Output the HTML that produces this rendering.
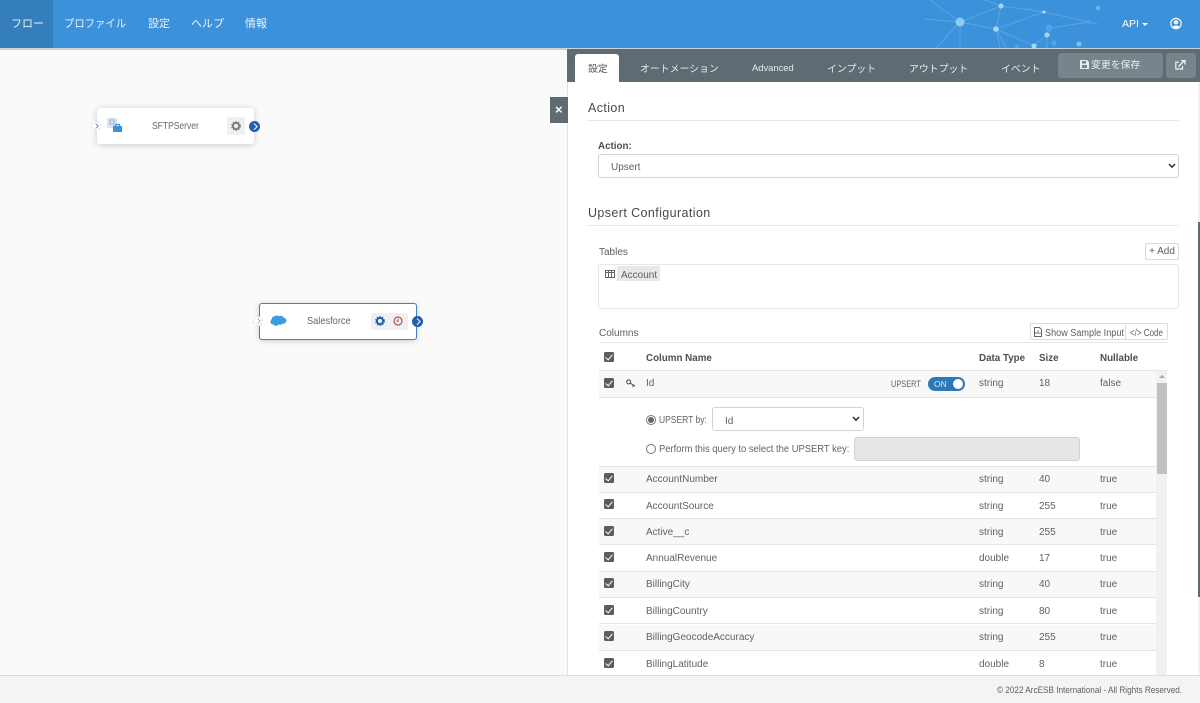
<!DOCTYPE html>
<html lang="ja">
<head>
<meta charset="utf-8">
<title>Flow</title>
<style>
*{box-sizing:border-box}
html,body{margin:0;padding:0;width:1200px;height:703px;overflow:hidden;background:#fafafa}
body{position:relative;font-family:"Liberation Sans","Noto Sans CJK JP",sans-serif;font-size:10px;color:#5a5f63}
.a{position:absolute;white-space:nowrap}
.nav{color:#e9f2fb;font-size:11px;top:15px}
.tab{color:#e8ecee;font-size:9.9px;top:61px}
.hd{font-size:12.5px;color:#44494d;font-weight:400;letter-spacing:.4px}
.b{font-weight:700;color:#4a4f53;font-size:9.8px}
.hr{height:1px;background:#e8e8e8}
.cb{position:absolute;left:604px;width:10px;height:10px;background:#5c5c5c;border-radius:1.5px}
.cb:after{content:"";position:absolute;left:3px;top:1px;width:3px;height:6px;border:solid #fff;border-width:0 1.5px 1.5px 0;transform:rotate(40deg)}
.row{position:absolute;left:599px;width:557px;height:26px;border-bottom:1px solid #e3e3e3}
.row.alt{background:#f8f8f8}
.t{position:absolute;white-space:nowrap;font-size:10px;color:#5e6266;margin-top:1px}
.sel{position:absolute;background:#fff;border:1px solid #cfd3d6;border-radius:3px;font-size:10px;color:#5e6266}
.sq{transform-origin:0 50%}
</style>
</head>
<body>
<!-- top bar -->
<div class="a" style="left:0;top:0;width:1200px;height:48px;background:#3c92da"></div>
<div class="a" style="left:0;top:0;width:53px;height:48px;background:#347fbb"></div>
<svg class="a" style="left:900px;top:0" width="230" height="48" viewBox="900 0 230 48">
<g stroke="#7fbdec" stroke-width="1" fill="none" opacity=".45">
<path d="M960 22L1001 6L996 29L960 22M1001 6L1044 12L996 29L1034 46M996 29L1006 48M996 29L1000 48M960 22L960 48M960 22L936 48M960 22L925 19M960 22L930 0M1001 6L985 0M1047 35L1047 48M1047 35L1034 46M1050 28L1089 22M1044 12L1098 24"/>
</g>
<circle cx="960" cy="22" r="4.5" fill="#8fcbf3"/><circle cx="1001" cy="6" r="2.5" fill="#a5d6f6"/>
<circle cx="996" cy="29" r="2.8" fill="#a5d6f6"/><circle cx="1044" cy="12" r="1.5" fill="#b7dff8"/>
<circle cx="1047" cy="35" r="2.5" fill="#a5d6f6"/><circle cx="1034" cy="46" r="2.6" fill="#a5d6f6"/>
<circle cx="1049" cy="28" r="3.5" fill="#4aa8ea"/><circle cx="1054" cy="43" r="2.6" fill="#4aa8ea"/>
<circle cx="1079" cy="44" r="2.5" fill="#7cc0ef"/><circle cx="1089" cy="22" r="2.4" fill="#4aa0e2"/>
<circle cx="1098" cy="8" r="2.4" fill="#68b2e8"/><circle cx="1029" cy="9" r="1.8" fill="#4c9fe0"/>
<circle cx="1017" cy="47" r="2" fill="#4aa8ea"/>
</svg>
<div class="a nav" style="left:11px">フロー</div>
<div class="a nav sq" style="left:64px;transform:scaleX(.94)">プロファイル</div>
<div class="a nav" style="left:148px">設定</div>
<div class="a nav" style="left:191px">ヘルプ</div>
<div class="a nav" style="left:245px">情報</div>
<div class="a" style="left:1122px;top:18px;color:#fff;font-size:10.5px">API</div>
<div class="a" style="left:1142px;top:23px;border:3px solid transparent;border-top:3px solid #fff;border-bottom:0"></div>
<svg class="a" style="left:1170px;top:17px" width="12" height="13" viewBox="0 0 12 12"><circle cx="6" cy="6" r="5.2" fill="none" stroke="#fff" stroke-width="1.1"/><circle cx="6" cy="4.7" r="2.2" fill="#fff"/><path d="M2.5 9.5C3.5 7.5 8.5 7.5 9.5 9.5C8 11.3 4 11.3 2.5 9.5Z" fill="#fff"/></svg>
<div class="a" style="left:0;top:48px;width:1200px;height:2px;background:#cdd3d8"></div>

<!-- canvas nodes -->
<div class="a" style="left:97px;top:108px;width:157px;height:36px;background:#fff;border-radius:3px;box-shadow:0 1px 7px rgba(0,0,0,.2)"></div>
<div class="a" style="left:91px;top:121px;width:10px;height:10px;border:1px dashed #d8d8d8;border-radius:50%;background:#fff"></div>
<div class="a" style="left:94px;top:124px;width:4px;height:4px;border:solid #7c8ea6;border-width:1px 1px 0 0;transform:rotate(45deg)"></div>
<svg class="a" style="left:107px;top:118px" width="16" height="16" viewBox="0 0 16 16"><rect x="0" y="0" width="10" height="10" fill="#dfe3e8"/><rect x="3" y="2" width="4" height="4" fill="none" stroke="#8fb7dc"/><rect x="6" y="8" width="9" height="6" fill="#3c92da"/><path d="M8.5 8V6.5h4V8" fill="none" stroke="#3c92da" stroke-width="1.2"/></svg>
<div class="a sq" style="left:152px;top:120px;font-size:10.5px;color:#666;transform:scaleX(.81)">SFTPServer</div>
<div class="a" style="left:227px;top:117px;width:18px;height:18px;background:#f0f0f0;border-radius:2px"></div>
<svg class="a" style="left:231px;top:121px" width="10" height="10" viewBox="0 0 10 10"><circle cx="5" cy="5" r="3.1" fill="none" stroke="#808080" stroke-width="2"/><circle cx="5" cy="5" r="4.3" fill="none" stroke="#808080" stroke-width="1.2" stroke-dasharray="1.4 1.4"/></svg>
<div class="a" style="left:249px;top:121px;width:11px;height:11px;background:#1f5fae;border-radius:50%"></div>
<div class="a" style="left:251.5px;top:124px;width:4.5px;height:4.5px;border:solid #fff;border-width:1.3px 1.3px 0 0;transform:rotate(45deg)"></div>

<div class="a" style="left:259px;top:303px;width:158px;height:37px;background:#fff;border:1px solid #3f7fc4;border-radius:3px;box-shadow:0 1px 6px rgba(0,0,0,.18)"></div>
<div class="a" style="left:253px;top:316px;width:10px;height:10px;border:1px dashed #d8d8d8;border-radius:50%;background:#fff"></div>
<div class="a" style="left:256px;top:319px;width:4px;height:4px;border:solid #a9b3bf;border-width:1px 1px 0 0;transform:rotate(45deg)"></div>
<svg class="a" style="left:270px;top:315px" width="17" height="12" viewBox="0 0 17 12"><path d="M5 1.5C6 .3 8 .2 9 1.3C10.5 .3 12.8 .8 13.5 2.6C15.5 2.8 16.8 4.6 16.2 6.5C15.7 8.3 14 9 12.3 8.7C11.5 10 9.5 10.3 8.4 9.4C7.5 11.3 4.5 11.5 3.5 9.4C1.5 9.6 .2 8 .5 6.2C.7 5 1.4 4.3 2 4C1.7 2.5 3.6 .7 5 1.5Z" fill="#3a9ddc"/></svg>
<div class="a sq" style="left:307px;top:315px;font-size:10.5px;color:#666;transform:scaleX(.88)">Salesforce</div>
<div class="a" style="left:371px;top:313px;width:37px;height:17px;background:#f0f0f0;border-radius:2px"></div>
<svg class="a" style="left:375px;top:316px" width="10" height="10" viewBox="0 0 10 10"><circle cx="5" cy="5" r="3.1" fill="none" stroke="#1f5fae" stroke-width="2"/><circle cx="5" cy="5" r="4.3" fill="none" stroke="#1f5fae" stroke-width="1.2" stroke-dasharray="1.4 1.4"/></svg>
<svg class="a" style="left:393px;top:316px" width="10" height="10" viewBox="0 0 10 10"><circle cx="5" cy="5" r="4" fill="none" stroke="#a8574a" stroke-width="1.2"/><path d="M5 2.6V5.2H3.2" fill="none" stroke="#a8574a" stroke-width="1"/></svg>
<div class="a" style="left:412px;top:316px;width:11px;height:11px;background:#1f5fae;border-radius:50%"></div>
<div class="a" style="left:414.5px;top:319px;width:4.5px;height:4.5px;border:solid #fff;border-width:1.3px 1.3px 0 0;transform:rotate(45deg)"></div>

<!-- right panel -->
<div class="a" style="left:567px;top:50px;width:631px;height:625px;background:#fff;border-left:1px solid #e0e0e0"></div>
<div class="a" style="left:1198px;top:50px;width:2px;height:625px;background:#f1f1f1"></div>
<div class="a" style="left:1198px;top:222px;width:2px;height:375px;background:#5c6a72"></div>
<div class="a" style="left:550px;top:97px;width:18px;height:26px;background:#5f6b72"></div>
<div class="a" style="left:555px;top:102px;color:#fff;font-size:13px;font-weight:700">×</div>

<div class="a" style="left:567px;top:49px;width:633px;height:33px;background:#5f6b72"></div>
<div class="a" style="left:575px;top:54px;width:44px;height:28px;background:#fff;border-radius:3px 3px 0 0"></div>
<div class="a tab" style="left:588px;color:#555">設定</div>
<div class="a tab" style="left:640px">オートメーション</div>
<div class="a tab" style="left:752px;top:62px;font-size:9.4px">Advanced</div>
<div class="a tab" style="left:827px">インプット</div>
<div class="a tab" style="left:909px">アウトプット</div>
<div class="a tab" style="left:1001px">イベント</div>
<div class="a" style="left:1058px;top:53px;width:105px;height:25px;background:#78848c;border-radius:3px"></div>
<svg class="a" style="left:1080px;top:60px" width="9" height="9" viewBox="0 0 9 9"><path d="M0 0H7L9 2V9H0Z" fill="#e8ecee"/><rect x="2" y="1" width="4" height="2.5" fill="#78848c"/><rect x="2" y="5" width="5" height="3" fill="#78848c"/></svg>
<div class="a" style="left:1091px;top:57px;color:#eef0f2;font-size:9.9px">変更を保存</div>
<div class="a" style="left:1166px;top:53px;width:30px;height:25px;background:#78848c;border-radius:3px"></div>
<svg class="a" style="left:1175px;top:60px" width="11" height="10" viewBox="0 0 11 10"><path d="M7.5 6V9H.8V2.2H4" fill="none" stroke="#f1f3f4" stroke-width="1.2"/><path d="M3.5 6.5L9 1M6 .6H10V4.5" fill="none" stroke="#f1f3f4" stroke-width="1.3"/></svg>

<div class="a hd" style="left:588px;top:101px">Action</div>
<div class="a hr" style="left:587px;top:120px;width:592px"></div>
<div class="a b" style="left:598px;top:141px">Action:</div>
<div class="sel" style="left:598px;top:154px;width:581px;height:24px;padding:7px 12px">Upsert</div>
<svg class="a" style="left:1168px;top:163px" width="8" height="6" viewBox="0 0 8 6"><path d="M1 1L4 4.2L7 1" fill="none" stroke="#333" stroke-width="1.5"/></svg>

<div class="a hd" style="left:588px;top:206px">Upsert Configuration</div>
<div class="a hr" style="left:587px;top:225px;width:592px"></div>

<div class="a" style="left:599px;top:247px">Tables</div>
<div class="a" style="left:1145px;top:243px;width:34px;height:17px;border:1px solid #d5dde4;border-radius:2px;text-align:center;font-size:10px;line-height:15px">+ Add</div>
<div class="a" style="left:598px;top:264px;width:581px;height:45px;border:1px solid #e6e6e6;border-radius:3px"></div>
<svg class="a" style="left:605px;top:270px" width="10" height="8" viewBox="0 0 10 8"><rect x=".5" y=".5" width="9" height="7" fill="none" stroke="#666"/><path d="M.5 2.5H9.5M3.5 .5V7.5M6.5 .5V7.5" stroke="#666" fill="none"/></svg>
<div class="a" style="left:617px;top:266px;width:43px;height:15px;background:#e8e8e8"></div>
<div class="a" style="left:621px;top:270px">Account</div>

<div class="a" style="left:599px;top:328px">Columns</div>
<div class="a" style="left:1030px;top:323px;width:138px;height:17px;border:1px solid #d5dde4;border-radius:2px"></div>
<div class="a" style="left:1125px;top:324px;width:1px;height:15px;background:#d5dde4"></div>
<svg class="a" style="left:1034px;top:327px" width="8" height="10" viewBox="0 0 8 10"><path d="M.5.5H5.5L7.5 2.5V9.5H.5Z" fill="none" stroke="#666"/><path d="M2 7V5M4 7V3.5M6 7V5.5" stroke="#666"/></svg>
<div class="a sq" style="left:1045px;top:328px;font-size:10px;transform:scaleX(.91)">Show Sample Input</div>
<div class="a sq" style="left:1130px;top:328px;font-size:10px;transform:scaleX(.8)">&lt;/&gt; Code</div>
<div class="a hr" style="left:599px;top:342px;width:569px"></div>

<div class="cb" style="top:352px"></div>
<div class="a b" style="left:646px;top:353px">Column Name</div>
<div class="a b" style="left:979px;top:353px">Data Type</div>
<div class="a b" style="left:1039px;top:353px">Size</div>
<div class="a b" style="left:1100px;top:353px">Nullable</div>

<!-- rows -->
<div class="a hr" style="left:599px;top:370px;width:569px"></div>
<div class="row alt" style="top:371px;height:27px"></div>
<div class="cb" style="top:378px"></div>
<svg class="a" style="left:626px;top:379px" width="10" height="9" viewBox="0 0 10 9"><circle cx="2.7" cy="2.9" r="2" fill="none" stroke="#555" stroke-width="1.1"/><path d="M4.3 4.2L9 7M7 6V8.3" fill="none" stroke="#555" stroke-width="1.1"/></svg>
<div class="t" style="left:646px;top:377px">Id</div>
<div class="t sq" style="left:891px;top:378px;font-size:9.5px;transform:scaleX(.78)">UPSERT</div>
<div class="a" style="left:928px;top:377px;width:37px;height:14px;background:#2c78b8;border-radius:7px"></div>
<div class="a" style="left:934px;top:379px;color:#d7e8f5;font-size:8.5px">ON</div>
<div class="a" style="left:953px;top:379px;width:10px;height:10px;background:#fff;border-radius:50%"></div>
<div class="t" style="left:979px;top:377px">string</div>
<div class="t" style="left:1039px;top:377px">18</div>
<div class="t" style="left:1100px;top:377px">false</div>

<div class="a" style="left:646px;top:415px;width:10px;height:10px;border:1px solid #777;border-radius:50%"></div>
<div class="a" style="left:648px;top:417px;width:6px;height:6px;background:#666;border-radius:50%"></div>
<div class="t sq" style="left:659px;top:414px;transform:scaleX(.85)">UPSERT by:</div>
<div class="sel" style="left:712px;top:407px;width:152px;height:24px;padding:8px 12px">Id</div>
<svg class="a" style="left:852px;top:416px" width="8" height="6" viewBox="0 0 8 6"><path d="M1 1L4 4.2L7 1" fill="none" stroke="#333" stroke-width="1.5"/></svg>
<div class="a" style="left:646px;top:444px;width:10px;height:10px;border:1px solid #777;border-radius:50%"></div>
<div class="t sq" style="left:659px;top:443px;transform:scaleX(.94)">Perform this query to select the UPSERT key:</div>
<div class="a" style="left:854px;top:437px;width:226px;height:24px;background:#e6e6e6;border:1px solid #d2d2d2;border-radius:3px"></div>
<div class="a hr" style="left:599px;top:466px;width:557px;background:#e3e3e3"></div>

<div class="row alt" style="top:467px"></div><div class="cb" style="top:473px"></div>
<div class="t" style="left:646px;top:473px">AccountNumber</div><div class="t" style="left:979px;top:473px">string</div><div class="t" style="left:1039px;top:473px">40</div><div class="t" style="left:1100px;top:473px">true</div>
<div class="row" style="top:493px"></div><div class="cb" style="top:499px"></div>
<div class="t" style="left:646px;top:500px">AccountSource</div><div class="t" style="left:979px;top:500px">string</div><div class="t" style="left:1039px;top:500px">255</div><div class="t" style="left:1100px;top:500px">true</div>
<div class="row alt" style="top:519px"></div><div class="cb" style="top:526px"></div>
<div class="t" style="left:646px;top:526px">Active__c</div><div class="t" style="left:979px;top:526px">string</div><div class="t" style="left:1039px;top:526px">255</div><div class="t" style="left:1100px;top:526px">true</div>
<div class="row" style="top:546px"></div><div class="cb" style="top:552px"></div>
<div class="t" style="left:646px;top:552px">AnnualRevenue</div><div class="t" style="left:979px;top:552px">double</div><div class="t" style="left:1039px;top:552px">17</div><div class="t" style="left:1100px;top:552px">true</div>
<div class="row alt" style="top:572px"></div><div class="cb" style="top:578px"></div>
<div class="t" style="left:646px;top:578px">BillingCity</div><div class="t" style="left:979px;top:578px">string</div><div class="t" style="left:1039px;top:578px">40</div><div class="t" style="left:1100px;top:578px">true</div>
<div class="row" style="top:598px"></div><div class="cb" style="top:605px"></div>
<div class="t" style="left:646px;top:605px">BillingCountry</div><div class="t" style="left:979px;top:605px">string</div><div class="t" style="left:1039px;top:605px">80</div><div class="t" style="left:1100px;top:605px">true</div>
<div class="row alt" style="top:625px"></div><div class="cb" style="top:631px"></div>
<div class="t" style="left:646px;top:631px">BillingGeocodeAccuracy</div><div class="t" style="left:979px;top:631px">string</div><div class="t" style="left:1039px;top:631px">255</div><div class="t" style="left:1100px;top:631px">true</div>
<div class="row" style="top:651px;height:24px;border:0"></div><div class="cb" style="top:658px"></div>
<div class="t" style="left:646px;top:658px">BillingLatitude</div><div class="t" style="left:979px;top:658px">double</div><div class="t" style="left:1039px;top:658px">8</div><div class="t" style="left:1100px;top:658px">true</div>

<!-- inner scrollbar -->
<div class="a" style="left:1156px;top:371px;width:11px;height:304px;background:#f1f1f1"></div>
<div class="a" style="left:1157px;top:383px;width:10px;height:91px;background:#c1c1c1"></div>
<div class="a" style="left:1159px;top:375px;border:3px solid transparent;border-bottom:3px solid #a8a8a8;border-top:0"></div>

<!-- footer -->
<div class="a" style="left:0;top:675px;width:1200px;height:28px;background:#f4f4f4;border-top:1px solid #dcdcdc"></div>
<div class="a sq" style="left:997px;top:685px;font-size:9.2px;color:#5a5f63;transform:scaleX(.89)">© 2022 ArcESB International - All Rights Reserved.</div>
</body>
</html>
